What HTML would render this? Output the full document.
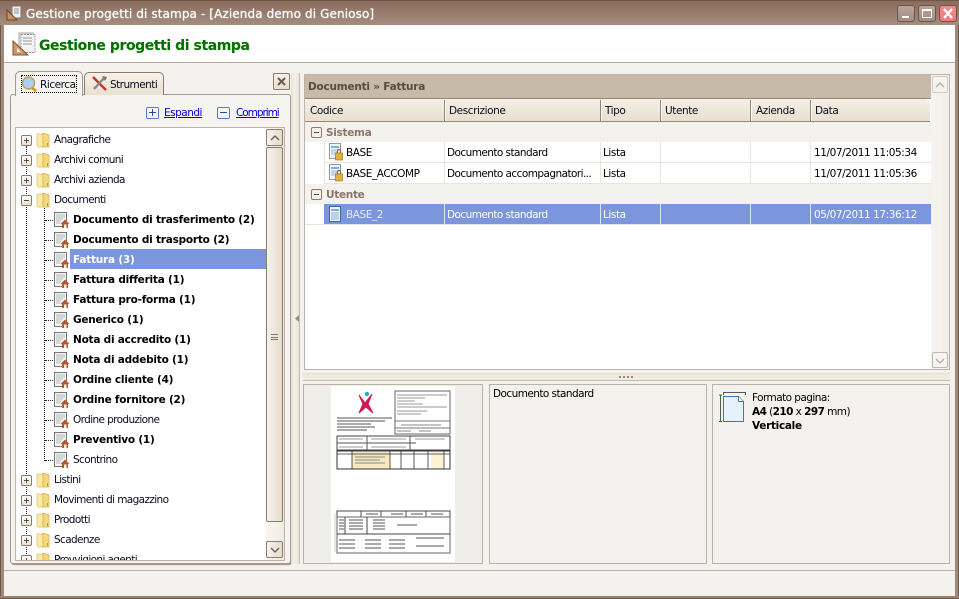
<!DOCTYPE html>
<html><head><meta charset="utf-8"><style>
html,body{margin:0;padding:0;overflow:hidden;width:959px;height:599px}
body{position:relative;background:#f4f2ee;font-family:"DejaVu Sans","Liberation Sans",sans-serif;font-size:10.5px;color:#0a0a20}
.a{position:absolute;box-sizing:border-box}
.t{position:absolute;white-space:nowrap;line-height:14px;letter-spacing:-.62px}
.b{font-weight:bold;font-size:10.5px;letter-spacing:-.22px;color:#000}
.pm{position:absolute;left:21px;width:11px;height:11px;box-sizing:border-box;border:1px solid #8c7a6c;border-radius:2px;background:linear-gradient(#fff,#e6e0d6)}
.pm:before{content:"";position:absolute;left:2px;top:4px;width:5px;height:1px;background:#5a4a40}
.pm.p:after{content:"";position:absolute;left:4px;top:2px;width:1px;height:5px;background:#5a4a40}
.dh{position:absolute;height:1px;border-top:1px dotted #222}
.dv{position:absolute;width:1px;border-left:1px dotted #222}
.f{position:absolute;left:36px;width:14px;height:16px}
.d{position:absolute;left:54px;width:16px;height:16px}
.hc{position:absolute;top:100px;height:21px;border-right:1px solid #9a8476;box-shadow:1px 0 0 #fbf9f4;font-size:10.5px;line-height:23px;padding-left:4px;letter-spacing:-.42px;box-sizing:border-box}
.cell{position:absolute;line-height:14px;white-space:nowrap;letter-spacing:-.56px;color:#000}
.dt{letter-spacing:-.43px}
.sb{position:absolute;box-sizing:border-box;border:1px solid #8c7a6c;border-radius:2px;background:linear-gradient(90deg,#f6f3ec,#e4dccc)}
.wb{position:absolute;top:5px;width:18px;height:17px;box-sizing:border-box;border:1px solid #6e5548;border-radius:3px;background:linear-gradient(#b9a69a,#a08c80)}
</style></head><body>
<svg width="0" height="0" style="position:absolute"><defs>
<symbol id="fo" viewBox="0 0 14 16"><path d="M1 2h5l1 1v12H2l-1-1z" fill="#fbeaa8" stroke="#dcbc66" stroke-width=".7"/><path d="M7 1l6 2v12H7z" fill="#f6d87c" stroke="#d4ac54" stroke-width=".7"/><path d="M11 11h1v3h-1z" fill="#6aa6c8"/></symbol>
<symbol id="dc" viewBox="0 0 16 16"><rect x=".5" y=".5" width="12" height="14" fill="#f6f6f2" stroke="#74747a"/><path d="M2 3h9M2 5h9M2 7h7M2 9h5M2 11h4" stroke="#b0b6bc"/><path d="M11 7.500l4.500 4.500H14v4H8v-4H6.500z" fill="#b85830"/><rect x="10" y="12.500" width="2.500" height="3.500" fill="#fff0d8"/></symbol>
<symbol id="lk" viewBox="0 0 16 18"><rect x="1.500" y=".5" width="11" height="15" fill="#f2f6fa" stroke="#8a9aa8"/><path d="M3 3h8v2H3z" fill="#7cb0d8"/><path d="M3 7h8M3 9h6M3 11h4" stroke="#a0b4c4"/><rect x="7.500" y="10" width="7" height="7" fill="#e0b040" stroke="#a07820" stroke-width=".7"/><path d="M9.500 10V8a1.500 1.500 0 0 1 3 0v2" fill="none" stroke="#806020"/></symbol>
</defs></svg>

<!-- window frame -->
<div class="a" style="left:0;top:0;width:959px;height:25px;background:linear-gradient(#8a6c5c,#a48c7e);border-top:1px solid #6e5648"></div>
<div class="a" style="left:0;top:25px;width:4px;height:574px;background:#a08a7c;border-left:1px solid #6e5648"></div>
<div class="a" style="left:955px;top:25px;width:4px;height:574px;background:#a08a7c;border-right:1px solid #6e5648"></div>
<div class="a" style="left:0;top:596px;width:959px;height:3px;background:#9a8272;border-bottom:1px solid #6e5648"></div>
<svg class="a" style="left:6px;top:5px" width="17" height="17" viewBox="0 0 17 17"><rect x="6" y="1" width="9" height="12" fill="#eee" stroke="#777"/><path d="M8 4h5M8 6h5M8 8h5" stroke="#999"/><path d="M1 15L1 5l10 10z" fill="#c89060" stroke="#704020"/></svg>
<div class="t" style="left:26px;top:7px;font-size:12px;color:#fff;letter-spacing:.11px;text-shadow:0 0 1px #fff">Gestione progetti di stampa - [Azienda demo di Genioso]</div>
<div class="wb" style="left:897px"><div class="a" style="left:4px;top:10px;width:7px;height:2px;background:#fff"></div></div>
<div class="wb" style="left:918px"><div class="a" style="left:3px;top:3px;width:10px;height:9px;border:1px solid #fff;border-top-width:2px"></div></div>
<div class="wb" style="left:939px;background:linear-gradient(#f08c8c,#ee7a7a)"><svg class="a" style="left:2px;top:2px" width="12" height="11"><path d="M2 1l8 9M10 1l-8 9" stroke="#fff" stroke-width="2.400"/></svg></div>

<!-- header -->
<div class="a" style="left:4px;top:25px;width:951px;height:38px;background:#fff;border-bottom:1px solid #b8a898"></div>
<svg class="a" style="left:12px;top:32px" width="24" height="25" viewBox="0 0 24 25"><rect x="7" y="1" width="14" height="17" fill="#e4e4e4" stroke="#aaa"/><rect x="9" y="2.500" width="14" height="18" fill="#f4f4f4" stroke="#999" stroke-dasharray="2 1"/><path d="M11 6h9M11 9h9M11 12h9" stroke="#999"/><path d="M1 23V9l15 14z" fill="#d09868" stroke="#805030"/><path d="M5 20v-4l4 4z" fill="#fff"/></svg>
<div class="t" style="left:39px;top:38px;font-size:14px;font-weight:bold;color:#007000;letter-spacing:-.43px;line-height:16px;text-shadow:0 0 1px #cfe0a0">Gestione progetti di stampa</div>

<!-- status line -->
<div class="a" style="left:4px;top:570px;width:951px;height:1px;background:#bcae9f"></div>

<!-- left panel -->
<div class="a" style="left:10px;top:94px;width:281px;height:470px;background:#f6f4f0;border:1px solid #a8968a;border-radius:3px;box-shadow:1px 1px 1px #9a8a7e"></div>
<div class="a" style="left:84px;top:72px;width:80px;height:23px;background:linear-gradient(#f6f2e8,#e8e0d0);border:1px solid #8c7a6c;border-bottom:0;border-radius:5px 5px 0 0"></div>
<div class="a" style="left:15px;top:71px;width:68px;height:25px;background:#f6f4f0;border:1px solid #a8968a;border-bottom:0;border-radius:5px 5px 0 0"></div>
<div class="a" style="left:21px;top:75px;width:56px;height:18px;border:1px dotted #000"></div>
<svg class="a" style="left:21px;top:76px" width="18" height="16" viewBox="0 0 18 16"><path d="M10 11l5 4" stroke="#d89020" stroke-width="2.600"/><circle cx="7.500" cy="7" r="6" fill="#a8d0f0" stroke="#c8a050" stroke-width="1.500"/></svg>
<div class="t" style="left:40px;top:78px;letter-spacing:-.45px">Ricerca</div>
<svg class="a" style="left:91px;top:75px" width="17" height="17" viewBox="0 0 17 17"><path d="M2 2l13 13" stroke="#c83030" stroke-width="2.400"/><path d="M14 2l-11 12" stroke="#888" stroke-width="2.400"/><path d="M11 1l5 1-2 4z" fill="#777"/></svg>
<div class="t" style="left:110px;top:78px;letter-spacing:-.55px">Strumenti</div>
<div class="a" style="left:273px;top:73px;width:17px;height:17px;background:linear-gradient(#f6f2ea,#e6dece);border:1px solid #8c7a6c;border-radius:2px"><svg class="a" style="left:3px;top:3px" width="9" height="9"><path d="M1 1l7 7M8 1l-7 7" stroke="#6a5a50" stroke-width="2"/></svg></div>

<div class="a" style="left:146px;top:107px;width:13px;height:12px;border:1px solid #5a7ac8;border-radius:2px;background:#f4f6fc"><div class="a" style="left:2px;top:4px;width:7px;height:1px;background:#2a4a98"></div><div class="a" style="left:5px;top:1px;width:1px;height:7px;background:#2a4a98"></div></div>
<div class="t" style="left:164px;top:106px;color:#0000e0;text-decoration:underline;letter-spacing:-.5px">Espandi</div>
<div class="a" style="left:217px;top:107px;width:13px;height:12px;border:1px solid #5a7ac8;border-radius:2px;background:#f4f6fc"><div class="a" style="left:2px;top:4px;width:7px;height:1px;background:#2a4a98"></div></div>
<div class="t" style="left:236px;top:106px;color:#0000e0;text-decoration:underline;letter-spacing:-1.05px">Comprimi</div>

<!-- tree -->
<div class="a" style="left:15px;top:127px;width:270px;height:434px;background:#fff;border:1px solid #c0b4a8"></div>
<div class="a" style="left:16px;top:128px;width:268px;height:432px;overflow:hidden">
<div style="position:absolute;left:-16px;top:-127px;width:284px;height:559px;overflow:hidden">
<div class="dv" style="left:26px;top:145px;height:414px"></div>
<div class="dv" style="left:44px;top:207px;height:253px"></div>
<div class="a" style="left:70px;top:248px;width:196px;height:20px;background:#7b96dc"></div>

<div class="pm p" style="top:134px"></div><svg class="f" style="top:131px"><use href="#fo"/></svg><div class="t" style="left:54px;top:132px">Anagrafiche</div>
<div class="pm p" style="top:154px"></div><svg class="f" style="top:151px"><use href="#fo"/></svg><div class="t" style="left:54px;top:152px">Archivi comuni</div>
<div class="pm p" style="top:174px"></div><svg class="f" style="top:171px"><use href="#fo"/></svg><div class="t" style="left:54px;top:172px">Archivi azienda</div>
<div class="pm" style="top:194px"></div><svg class="f" style="top:191px"><use href="#fo"/></svg><div class="t" style="left:54px;top:192px">Documenti</div>

<div class="dh" style="left:45px;top:219px;width:8px"></div><svg class="d" style="top:211px"><use href="#dc"/></svg><div class="t b" style="left:73px;top:212px">Documento di trasferimento (2)</div>
<div class="dh" style="left:45px;top:239px;width:8px"></div><svg class="d" style="top:231px"><use href="#dc"/></svg><div class="t b" style="left:73px;top:232px">Documento di trasporto (2)</div>
<div class="dh" style="left:45px;top:259px;width:8px"></div><svg class="d" style="top:251px"><use href="#dc"/></svg><div class="t b" style="left:73px;top:252px;color:#fff">Fattura (3)</div>
<div class="dh" style="left:45px;top:279px;width:8px"></div><svg class="d" style="top:271px"><use href="#dc"/></svg><div class="t b" style="left:73px;top:272px">Fattura differita (1)</div>
<div class="dh" style="left:45px;top:299px;width:8px"></div><svg class="d" style="top:291px"><use href="#dc"/></svg><div class="t b" style="left:73px;top:292px">Fattura pro-forma (1)</div>
<div class="dh" style="left:45px;top:319px;width:8px"></div><svg class="d" style="top:311px"><use href="#dc"/></svg><div class="t b" style="left:73px;top:312px">Generico (1)</div>
<div class="dh" style="left:45px;top:339px;width:8px"></div><svg class="d" style="top:331px"><use href="#dc"/></svg><div class="t b" style="left:73px;top:332px">Nota di accredito (1)</div>
<div class="dh" style="left:45px;top:359px;width:8px"></div><svg class="d" style="top:351px"><use href="#dc"/></svg><div class="t b" style="left:73px;top:352px">Nota di addebito (1)</div>
<div class="dh" style="left:45px;top:379px;width:8px"></div><svg class="d" style="top:371px"><use href="#dc"/></svg><div class="t b" style="left:73px;top:372px">Ordine cliente (4)</div>
<div class="dh" style="left:45px;top:399px;width:8px"></div><svg class="d" style="top:391px"><use href="#dc"/></svg><div class="t b" style="left:73px;top:392px">Ordine fornitore (2)</div>
<div class="dh" style="left:45px;top:419px;width:8px"></div><svg class="d" style="top:411px"><use href="#dc"/></svg><div class="t" style="left:73px;top:412px">Ordine produzione</div>
<div class="dh" style="left:45px;top:439px;width:8px"></div><svg class="d" style="top:431px"><use href="#dc"/></svg><div class="t b" style="left:73px;top:432px">Preventivo (1)</div>
<div class="dh" style="left:45px;top:459px;width:8px"></div><svg class="d" style="top:451px"><use href="#dc"/></svg><div class="t" style="left:73px;top:452px">Scontrino</div>

<div class="pm p" style="top:474px"></div><svg class="f" style="top:471px"><use href="#fo"/></svg><div class="t" style="left:54px;top:472px">Listini</div>
<div class="pm p" style="top:494px"></div><svg class="f" style="top:491px"><use href="#fo"/></svg><div class="t" style="left:54px;top:492px">Movimenti di magazzino</div>
<div class="pm p" style="top:514px"></div><svg class="f" style="top:511px"><use href="#fo"/></svg><div class="t" style="left:54px;top:512px">Prodotti</div>
<div class="pm p" style="top:534px"></div><svg class="f" style="top:531px"><use href="#fo"/></svg><div class="t" style="left:54px;top:532px">Scadenze</div>
<div class="pm p" style="top:554px"></div><svg class="f" style="top:551px"><use href="#fo"/></svg><div class="t" style="left:54px;top:552px">Provvigioni agenti</div>
</div></div>
<!-- tree scrollbar -->
<div class="a" style="left:266px;top:128px;width:18px;height:432px;background:linear-gradient(90deg,#f8f6f0,#f0ece2)"></div>
<div class="sb" style="left:266px;top:129px;width:17px;height:17px"><svg class="a" style="left:3px;top:5px" width="10" height="6"><path d="M1 5l4-4 4 4" fill="none" stroke="#6a5a50" stroke-width="1.300"/></svg></div>
<div class="sb" style="left:266px;top:147px;width:17px;height:375px"><div class="a" style="left:4px;top:186px;width:7px;height:6px;border-top:1px solid #8c7464;border-bottom:1px solid #8c7464"><div class="a" style="left:0;top:1px;width:7px;height:2px;border-bottom:1px solid #8c7464"></div></div></div>
<div class="sb" style="left:266px;top:541px;width:17px;height:17px"><svg class="a" style="left:3px;top:5px" width="10" height="6"><path d="M1 1l4 4 4-4" fill="none" stroke="#6a5a50" stroke-width="1.300"/></svg></div>

<!-- splitter vertical -->
<div class="a" style="left:291px;top:73px;width:9px;height:491px;background:linear-gradient(90deg,#e8e2d6,#f4f0e6 50%,#e8e2d6);border-right:1px solid #c8bcb0"></div>
<svg class="a" style="left:295px;top:315px" width="5" height="7"><path d="M4 0v7L0 3.500z" fill="#9a8a7e"/></svg>

<!-- top right panel -->
<div class="a" style="left:304px;top:74px;width:646px;height:296px;background:#fff;border:1px solid #bcb4ac"></div>
<div class="a" style="left:305px;top:75px;width:626px;height:24px;background:#c8baa8;border-bottom:1px solid #9a8476"></div>
<div class="t" style="left:308px;top:80px;font-weight:bold;color:#5a4a40;letter-spacing:-.22px">Documenti » Fattura</div>
<div class="a" style="left:931px;top:75px;width:18px;height:294px;background:linear-gradient(90deg,#f6f4f0,#f2efe9)"></div>
<div class="a" style="left:932px;top:76px;width:16px;height:17px;background:#f6f4f0;border:1px solid #d0cac2;border-radius:2px"><svg class="a" style="left:2px;top:5px" width="10" height="6"><path d="M1 5l4-4 4 4" fill="none" stroke="#b4aca4" stroke-width="1.300"/></svg></div>
<div class="a" style="left:932px;top:352px;width:16px;height:16px;background:#f6f4f0;border:1px solid #c0b8b0;border-radius:2px"><svg class="a" style="left:2px;top:5px" width="10" height="6"><path d="M1 1l4 4 4-4" fill="none" stroke="#b4aca4" stroke-width="1.300"/></svg></div>

<!-- column header -->
<div class="a" style="left:305px;top:99px;width:625px;height:23px;background:linear-gradient(#f4f0e6,#e8e0d0);border-bottom:1px solid #9a8476;border-radius:4px 5px 0 0"></div>
<div class="hc" style="left:305px;width:140px;padding-left:5px">Codice</div>
<div class="hc" style="left:445px;width:156px">Descrizione</div>
<div class="hc" style="left:601px;width:60px">Tipo</div>
<div class="hc" style="left:661px;width:90px">Utente</div>
<div class="hc" style="left:751px;width:60px;padding-left:5px">Azienda</div>
<div class="hc" style="left:811px;width:119px;border-right:0;box-shadow:none">Data</div>

<!-- groups -->
<div class="a" style="left:305px;top:122px;width:626px;height:20px;background:#f4f2ee"></div>
<div class="a" style="left:305px;top:184px;width:626px;height:20px;background:#f4f2ee"></div>
<div class="a" style="left:311px;top:127px;width:11px;height:11px;border:1px solid #8c7a6c;border-radius:2px;background:#f6f2ea"><div class="a" style="left:2px;top:4px;width:5px;height:1px;background:#5a4a40"></div></div>
<div class="t" style="left:326px;top:126px;font-weight:bold;color:#8c7666;letter-spacing:-.3px">Sistema</div>
<div class="a" style="left:311px;top:189px;width:11px;height:11px;border:1px solid #8c7a6c;border-radius:2px;background:#f6f2ea"><div class="a" style="left:2px;top:4px;width:5px;height:1px;background:#5a4a40"></div></div>
<div class="t" style="left:326px;top:188px;font-weight:bold;color:#8c7666;letter-spacing:-.3px">Utente</div>

<!-- rows -->
<div class="a" style="left:324px;top:204px;width:607px;height:20px;background:#7b96dc"></div>
<div class="a" style="left:324px;top:162px;width:607px;height:1px;background:#e8e4de"></div>
<div class="a" style="left:324px;top:183px;width:607px;height:1px;background:#e8e4de"></div>
<div class="a" style="left:305px;top:224px;width:626px;height:1px;background:#e8e4de"></div>
<div class="a" style="left:324px;top:142px;width:1px;height:41px;background:#e8e4de"></div>
<div class="a" style="left:444px;top:142px;width:1px;height:41px;background:#e8e4de"></div><div class="a" style="left:600px;top:142px;width:1px;height:41px;background:#e8e4de"></div><div class="a" style="left:660px;top:142px;width:1px;height:41px;background:#e8e4de"></div><div class="a" style="left:750px;top:142px;width:1px;height:41px;background:#e8e4de"></div><div class="a" style="left:810px;top:142px;width:1px;height:41px;background:#e8e4de"></div>
<div class="a" style="left:444px;top:204px;width:1px;height:20px;background:#dde4f6"></div><div class="a" style="left:600px;top:204px;width:1px;height:20px;background:#dde4f6"></div><div class="a" style="left:660px;top:204px;width:1px;height:20px;background:#dde4f6"></div><div class="a" style="left:750px;top:204px;width:1px;height:20px;background:#dde4f6"></div><div class="a" style="left:810px;top:204px;width:1px;height:20px;background:#dde4f6"></div>

<svg class="a" style="left:328px;top:143px" width="16" height="18"><use href="#lk"/></svg>
<div class="cell dt" style="left:346px;top:146px">BASE</div><div class="cell" style="left:447px;top:146px">Documento standard</div><div class="cell dt" style="left:603px;top:146px">Lista</div><div class="cell dt" style="left:814px;top:146px">11/07/2011 11:05:34</div>
<svg class="a" style="left:328px;top:164px" width="16" height="18"><use href="#lk"/></svg>
<div class="cell dt" style="left:346px;top:167px">BASE_ACCOMP</div><div class="cell" style="left:447px;top:167px">Documento accompagnatori...</div><div class="cell dt" style="left:603px;top:167px">Lista</div><div class="cell dt" style="left:814px;top:167px">11/07/2011 11:05:36</div>
<svg class="a" style="left:329px;top:206px" width="13" height="16" viewBox="0 0 13 16"><rect x=".5" y=".5" width="11" height="15" fill="#eef4fa" stroke="#3a6a9a"/><path d="M2 3h8v2H2z" fill="#7cb0d8"/><path d="M2 7h8M2 9h8M2 11h8M2 13h8" stroke="#8ab0cc"/></svg>
<div class="cell dt" style="left:346px;top:208px;color:#e8ecf8">BASE_2</div><div class="cell" style="left:447px;top:208px;color:#fff">Documento standard</div><div class="cell dt" style="left:603px;top:208px;color:#fff">Lista</div><div class="cell dt" style="left:814px;top:208px;color:#fff">05/07/2011 17:36:12</div>

<!-- h splitter -->
<div class="a" style="left:303px;top:373px;width:647px;height:8px;background:#f0ebdf;border-bottom:1px solid #c8bcb0;border-top:1px solid #e4ded2"></div>
<div class="a" style="left:619px;top:376px;width:14px;height:2px;background:repeating-linear-gradient(90deg,#9a8a7e 0 2px,transparent 2px 4px)"></div>

<!-- bottom panels -->
<div class="a" style="left:303px;top:384px;width:180px;height:180px;border:1px solid #bfb2a5;background:#f0eeea"></div>
<svg class="a" style="left:331px;top:386px" width="124" height="176" viewBox="0 0 124 176">
<rect width="124" height="176" fill="#fff"/>
<path d="M28 9L34 17L41 8L37 18L42 27L35 21L28 27L32 18z" fill="#d01850" stroke="#d01850"/><circle cx="36" cy="8" r="2.200" fill="#30a0e0"/>
<rect x="64" y="5" width="55" height="43" fill="none" stroke="#666"/><path d="M64 35h55M64 42h55" stroke="#777"/>
<path d="M66 9h50M66 12h28M66 15h18M66 18h26M66 21h50M66 25h30M66 28h24" stroke="#999"/><path d="M70 39h40M66 45h14M88 45h12" stroke="#888"/>
<path d="M6 32h55M6 35h48M6 38h34M6 41h38M6 44h30" stroke="#777" stroke-width="1.200"/>
<rect x="6" y="50" width="113" height="14" fill="none" stroke="#444"/><path d="M36 50v14M79 50v14M6 57h79" stroke="#555"/>
<path d="M8 53h24M40 53h35M84 53h30M8 61h24M40 61h35" stroke="#999"/>
<rect x="21" y="66" width="38" height="17" fill="#f8e8c0"/><rect x="100" y="66" width="13" height="17" fill="#fdf2d4"/>
<rect x="6" y="65" width="113" height="18" fill="none" stroke="#333"/><path d="M6 68h113M21 65v18M59 65v18M70 65v18M83 65v18M97 65v18M113 65v18" stroke="#333" stroke-width=".8"/>
<path d="M24 71h30M24 74h25M24 77h30" stroke="#888"/>
<rect x="6" y="125" width="113" height="6" fill="none" stroke="#444"/><path d="M30 125v6M50 125v6M75 125v6M95 125v6M35 128h12M60 128h12M80 128h12M100 128h12" stroke="#555"/>
<rect x="6" y="131" width="113" height="36" fill="none" stroke="#666"/><path d="M6 148h113M14 131v17M36 131v17" stroke="#444"/>
<path d="M8 134h5M8 137h5M8 140h5M8 143h5M18 134h14M18 137h14M18 140h14M18 143h14M42 134h12M42 137h12M42 140h12M42 143h12M66 139h20M8 154h16M8 158h16M8 162h16M34 154h16M34 158h16M34 162h16M58 154h16M58 158h16M58 162h16M85 152h28M85 160h28" stroke="#555"/>
<path d="M4 128v38" stroke="#ccc"/>
</svg>
<div class="a" style="left:489px;top:384px;width:218px;height:180px;border:1px solid #bfb2a5"></div>
<div class="cell" style="left:493px;top:387px">Documento standard</div>
<div class="a" style="left:712px;top:384px;width:238px;height:180px;border:1px solid #bfb2a5"></div>
<svg class="a" style="left:717px;top:390px" width="34" height="34" viewBox="0 0 34 34">
<path d="M3.500 5v27M2 5h3M2 31.500h3" stroke="#5a5a50" fill="none"/><path d="M7 2v3M29 2v3M7 2.500h22" stroke="#5a5a50" fill="none" transform="translate(-.5 0)"/>
<path d="M6.500 6.500h15l5 5V31.500h-20z" fill="#e6f1fb" stroke="#3a78b8"/><path d="M21.500 6.500v5h5" fill="#fff" stroke="#3a78b8"/></svg>
<div class="cell" style="left:752px;top:391px">Formato pagina:</div>
<div class="cell" style="left:752px;top:405px"><b>A4</b> (<b>210</b> x <b>297</b> mm)</div>
<div class="cell" style="left:752px;top:419px;letter-spacing:-.3px"><b>Verticale</b></div>
</body></html>
